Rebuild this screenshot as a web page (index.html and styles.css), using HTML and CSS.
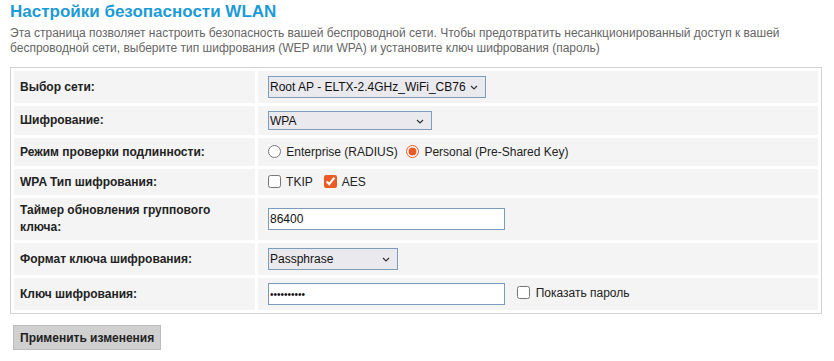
FILE: index.html
```html
<!DOCTYPE html>
<html lang="ru">
<head>
    <meta charset="UTF-8">
    <title>Настройки безопасности WLAN</title>
    <link rel="stylesheet" href="styles.css">
</head>
<body>
    <div class="page">
        <h1 class="pageTitle">Настройки безопасности WLAN</h1>
        <p class="pageInfo">Эта страница позволяет настроить безопасность вашей беспроводной сети. Чтобы предотвратить несанкционированный доступ к вашей беспроводной сети, выберите тип шифрования (WEP или WPA) и установите ключ шифрования (пароль)</p>

        <form id="wlanSecurityForm">
            <table class="settings">
                <tr>
                    <td class="label">Выбор сети:</td>
                    <td class="value">
                        <span class="selectWrap">
                            <select class="ssidSelect" name="ssid">
                                <option>Root AP - ELTX-2.4GHz_WiFi_CB76</option>
                            </select>
                            <svg class="chevron" width="8" height="5" viewBox="0 0 8 5"><path d="M1 1 L4 4 L7 1" fill="none" stroke="#333" stroke-width="1.2"/></svg>
                        </span>
                    </td>
                </tr>
                <tr>
                    <td class="label">Шифрование:</td>
                    <td class="value">
                        <span class="selectWrap">
                            <select class="encSelect" name="encrypt">
                                <option>WPA</option>
                                <option>WPA2</option>
                                <option>WEP</option>
                            </select>
                            <svg class="chevron" width="8" height="5" viewBox="0 0 8 5"><path d="M1 1 L4 4 L7 1" fill="none" stroke="#333" stroke-width="1.2"/></svg>
                        </span>
                    </td>
                </tr>
                <tr class="rowRadio">
                    <td class="label">Режим проверки подлинности:</td>
                    <td class="value">
                        <label class="choice"><input type="radio" name="auth"> Enterprise (RADIUS)</label>
                        <label class="choice"><input type="radio" name="auth" checked> Personal (Pre-Shared Key)</label>
                    </td>
                </tr>
                <tr class="rowCheck">
                    <td class="label">WPA Тип шифрования:</td>
                    <td class="value">
                        <label class="choice"><input type="checkbox" name="tkip"> TKIP</label>
                        <label class="choice"><input type="checkbox" name="aes" checked> AES</label>
                    </td>
                </tr>
                <tr>
                    <td class="label">Таймер обновления группового ключа:</td>
                    <td class="value">
                        <input class="textInput" type="text" name="groupKeyTimer" value="86400">
                    </td>
                </tr>
                <tr>
                    <td class="label">Формат ключа шифрования:</td>
                    <td class="value">
                        <span class="selectWrap">
                            <select class="formatSelect" name="keyFormat">
                                <option>Passphrase</option>
                                <option>HEX (64 characters)</option>
                            </select>
                            <svg class="chevron" width="8" height="5" viewBox="0 0 8 5"><path d="M1 1 L4 4 L7 1" fill="none" stroke="#333" stroke-width="1.2"/></svg>
                        </span>
                    </td>
                </tr>
                <tr>
                    <td class="label">Ключ шифрования:</td>
                    <td class="value">
                        <input class="textInput pskInput" id="pskValue" type="password" name="psk" value="1234567890">
                        <label class="choice showPass"><input type="checkbox" id="showPass"> Показать пароль</label>
                    </td>
                </tr>
            </table>
            <button type="submit" class="applyBtn">Применить изменения</button>
        </form>
    </div>

    <script>
        var showPass = document.getElementById("showPass");
        var pskValue = document.getElementById("pskValue");

        showPass.addEventListener("change", function() {
            pskValue.type = showPass.checked ? "text" : "password";
        });

        document.getElementById("wlanSecurityForm").addEventListener("submit", function(event) {
            event.preventDefault();
        });
    </script>
</body>
</html>
```

FILE: styles.css
```css
body {
    margin: 0;
    background-color: #fff;
    font-family: "Liberation Sans", Arial, sans-serif;
    font-size: 12px;
    color: #222;
}

.page {
    width: 812px;
    padding: 0 10px;
}

.pageTitle {
    margin: 0;
    padding-top: 2px;
    font-size: 17px;
    line-height: 20px;
    color: #1b9ad6;
}

.pageInfo {
    margin: 4px 0 11px 0;
    line-height: 15px;
    color: #666;
}

.settings {
    width: 812px;
    border: 1px solid #d2d2d2;
    border-spacing: 3px;
}

.settings td {
    background-color: #f4f4f4;
    vertical-align: middle;
}

.label {
    width: 229px;
    padding: 4px 6px;
    font-weight: bold;
    line-height: 17px;
}

.value {
    padding: 5px 10px;
    line-height: 16px;
}

select, .textInput {
    font-family: "Liberation Sans", Arial, sans-serif;
    font-size: 12px;
    color: #111;
    border: 1px solid #7d9bba;
    border-radius: 0;
    margin: 0;
    box-sizing: border-box;
    vertical-align: middle;
}

.selectWrap {
    position: relative;
    display: inline-block;
    vertical-align: middle;
}

select {
    display: block;
    appearance: none;
    background-color: #eaeaee;
    padding: 0 18px 0 1px;
}

.chevron {
    position: absolute;
    right: 8px;
    top: 50%;
    margin-top: -2px;
    pointer-events: none;
}

.ssidSelect {
    width: 218px;
    height: 22px;
}

.encSelect {
    width: 164px;
    height: 19px;
}

.formatSelect {
    width: 130px;
    height: 22px;
}

.textInput {
    width: 237px;
    height: 22px;
    padding: 0 1px;
    background-color: #fff;
}

.pskInput {
    font-size: 10px;
}

.rowRadio .value {
    padding: 6px 10px;
}

.choice {
    margin-right: 5px;
    white-space: nowrap;
}

.rowCheck .choice {
    margin-right: 8px;
}

.choice input {
    width: 13px;
    height: 13px;
    margin: 0 2px 0 0;
    vertical-align: -2px;
    accent-color: #ec5a26;
}

.showPass {
    margin-left: 9px;
}

.applyBtn {
    margin-top: 11px;
    margin-left: 3px;
    padding: 0 6px;
    height: 25px;
    background-color: #d0d0d0;
    border: 1px solid #bcbcbc;
    font-family: "Liberation Sans", Arial, sans-serif;
    font-size: 12px;
    font-weight: bold;
    color: #222;
    cursor: pointer;
}
```
